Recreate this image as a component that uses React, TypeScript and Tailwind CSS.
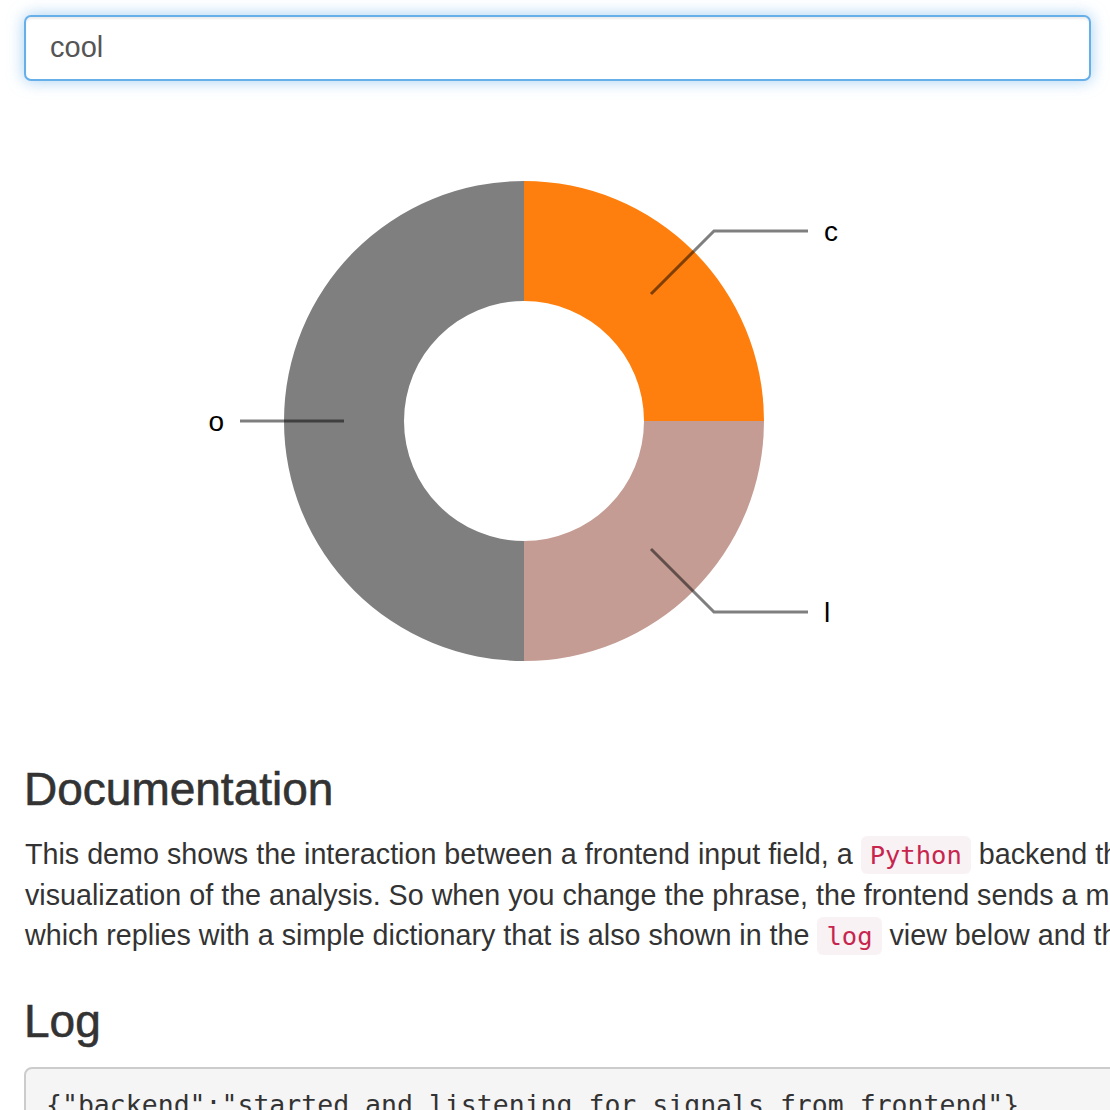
const arcs = [
  { d: "M500,80 A240,240 0 0,1 740,320 L620,320 A120,120 0 0,0 500,200 Z", fill: "#ff7f0e" },
  { d: "M740,320 A240,240 0 0,1 500,560 L500,440 A120,120 0 0,0 620,320 Z", fill: "#c49c94" },
  { d: "M500,560 A240,240 0 0,1 500,80 L500,200 A120,120 0 0,0 500,440 Z", fill: "#7f7f7f" },
];

function Donut() {
  return (
    <svg width="1067" height="640" viewBox="0 0 1067 640" className="block">
      {arcs.map((a) => (
        <path key={a.fill} d={a.d} fill={a.fill} />
      ))}
      <g fill="none" stroke="#000" strokeOpacity="0.5" strokeWidth="3">
        <polyline points="627,193 690,130 784,130" />
        <polyline points="627,448 690,511 784,511" />
        <polyline points="320,320 216,320" />
      </g>
      <g fontFamily="'Liberation Sans', Arial, sans-serif" fontSize="28" fill="#000">
        <text x="800" y="130" dy="0.35em">c</text>
        <text x="800" y="511" dy="0.35em">l</text>
        <text x="200" y="320" dy="0.35em" textAnchor="end">o</text>
      </g>
    </svg>
  );
}

function Code({ children }: { children: string }) {
  return (
    <code className="font-['DejaVu_Sans_Mono',monospace] text-[25.5px] text-[#c7254e] bg-[#f9f2f4] rounded-[6px] px-[9px] py-[4px]">
      {children}
    </code>
  );
}

export default function App() {
  return (
    <div className="w-[1110px] h-[1110px] overflow-hidden bg-white text-[#333] font-['Liberation_Sans',Arial,sans-serif]">
      <div className="w-[1500px] pl-[24px] pt-[15px]">
        <div className="w-[1067px] h-[66px] border-2 border-[#66afe9] rounded-[7px] bg-white px-[24px] flex items-center text-[29px] text-[#555] shadow-[inset_0_2px_2px_rgba(0,0,0,0.075),0_0_16px_rgba(102,175,233,0.6)]">
          cool
        </div>

        <div className="mt-[20px]">
          <Donut />
        </div>

        <h3 className="mt-[23px] text-[46px] leading-[1.1] font-medium [-webkit-text-stroke:0.6px_#333]">Documentation</h3>
        <p className="mt-[19px] pl-[1px] text-[28.7px] leading-[40px] whitespace-nowrap">
          This demo shows the interaction between a frontend input field, a <Code>Python</Code> backend that analyses the phrase and returns
          <br />
          visualization of the analysis. So when you change the phrase, the frontend sends a message to the backend
          <br />
          which replies with a simple dictionary that is also shown in the <Code>log</Code> view below and then
        </p>

        <h3 className="mt-[40px] text-[46px] leading-[1.1] font-medium [-webkit-text-stroke:0.6px_#333]">Log</h3>
        <pre className="mt-[21px] w-[1200px] border-2 border-[#ccc] bg-[#f5f5f5] rounded-[8px] pl-[20px] pt-[16px] pb-[16px] font-['DejaVu_Sans_Mono',monospace] text-[26.5px] leading-[40px] text-[#333]">
          {'{"backend":"started and listening for signals from frontend"}'}
        </pre>
      </div>
    </div>
  );
}
